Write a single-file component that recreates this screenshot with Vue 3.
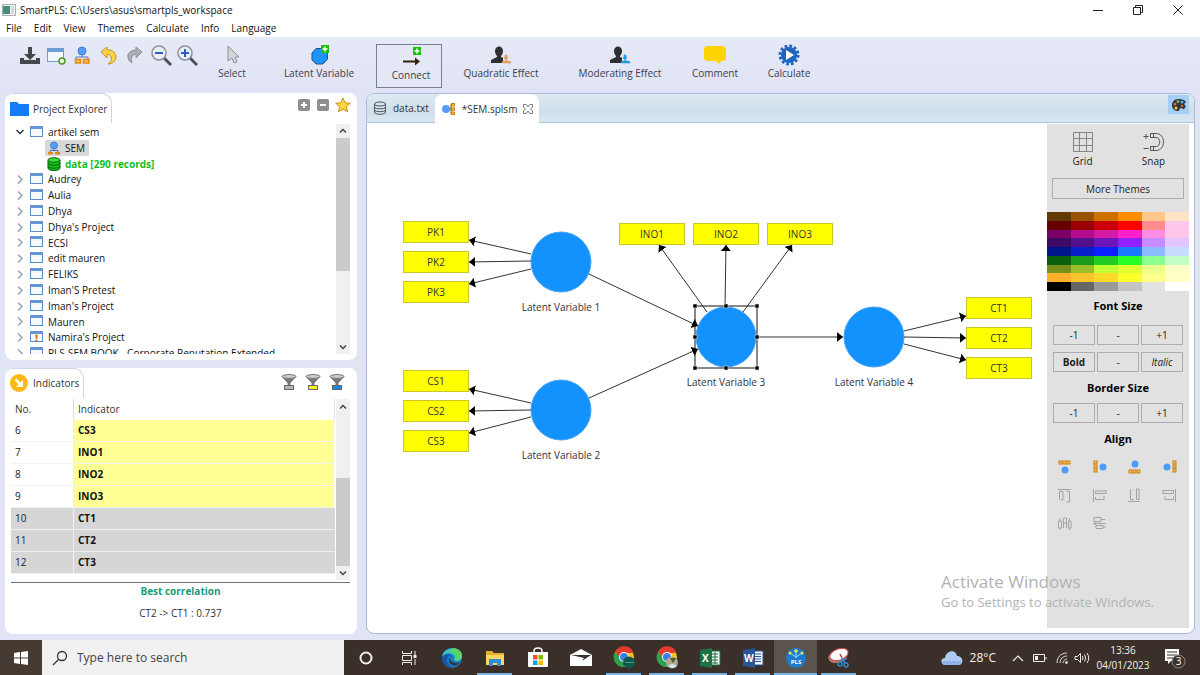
<script setup>
const menus = ['File', 'Edit', 'View', 'Themes', 'Calculate', 'Info', 'Language']
const projects = [
  'Audrey', 'Aulia', 'Dhya', "Dhya's Project", 'ECSI', 'edit mauren', 'FELIKS', "Iman'S Pretest",
  "Iman's Project", 'Mauren', "Namira's Project", 'PLS-SEM BOOK - Corporate Reputation Extended',
]
const indicators = [
  { no: 6, name: 'CS3', used: true },
  { no: 7, name: 'INO1', used: true },
  { no: 8, name: 'INO2', used: true },
  { no: 9, name: 'INO3', used: true },
  { no: 10, name: 'CT1' },
  { no: 11, name: 'CT2' },
  { no: 12, name: 'CT3' },
]
const filters = [
  { name: 'All', color: '#b4b4b4' },
  { name: 'Used', color: '#f7f01c' },
  { name: 'Unused', color: '#1e86dc' },
]
const boxes = [
  ['PK1', 36, 97], ['PK2', 36, 127], ['PK3', 36, 157],
  ['CS1', 36, 246], ['CS2', 36, 276], ['CS3', 36, 306],
  ['INO1', 252, 99], ['INO2', 326, 99], ['INO3', 400, 99],
  ['CT1', 599, 173], ['CT2', 599, 203], ['CT3', 599, 233],
]
const latents = [
  ['Latent Variable 1', 194, 138], ['Latent Variable 2', 194, 286],
  ['Latent Variable 3', 359, 213], ['Latent Variable 4', 507, 213],
]
const paths = [
  [164, 130, 102, 116], [164, 137, 102, 138], [164, 145, 102, 160],
  [164, 279, 102, 265], [164, 286, 102, 287], [164, 293, 102, 309],
  [340, 188, 292, 121], [358, 183, 359, 121], [376, 188, 425, 121],
  [222, 150, 331, 202], [222, 274, 331, 225], [392, 213, 476, 213],
  [537, 207, 599, 192], [537, 213, 599, 214], [537, 220, 599, 236],
]
const handles = [[328, 182], [359, 182], [390, 182], [328, 213], [390, 213], [328, 244], [359, 244], [390, 244]]
const swatches = [
  '#623a00', '#975300', '#cc7000', '#ff8c00', '#ffc78a', '#ffe3c5',
  '#650000', '#9b0000', '#cc0000', '#ff0000', '#ff8c8c', '#ffc6ec',
  '#7c0067', '#b10d8c', '#d41ba5', '#ff20cc', '#ff8ce0', '#ffc6ec',
  '#3d0a66', '#510f8c', '#6d17bb', '#9020ff', '#c78cff', '#e3c6ff',
  '#00148c', '#0a1fcc', '#0a20ff', '#1a78ff', '#8cbcff', '#c6ddff',
  '#0a600f', '#1a9b1a', '#22cc22', '#2aff2a', '#8cff8c', '#c6ffc6',
  '#76901a', '#9bbf2a', '#c2ff33', '#e1ff33', '#ecff8c', '#ffffc6',
  '#ffb02a', '#ffc52a', '#ffd92a', '#ffff2a', '#ffff8c', '#ffffc6',
  '#000000', '#666666', '#999999', '#c3c3c3', '#e1e1e1', '#ffffff',
]
const alignColor = [
  { c: [7, 10], b: [[1, 1], [5, 1], [9, 1]] },
  { c: [10, 7], b: [[1, 1], [1, 5], [1, 9]] },
  { c: [7, 4], b: [[1, 10], [5, 10], [9, 10]] },
  { c: [4, 7], b: [[10, 1], [10, 5], [10, 9]] },
]
const alignGray = [
  'M1 1.5H14M2.5 12V3.5H6V12H4M9.5 3.5H12.500V14H9.500',
  'M1.500 1V14M14 2V5.500H3.500V3H14M12 8V11.500H3.500V9',
  'M1 13.500H13M3.500 1V11.500H6.500M9.500 1V11.500H12V1H9',
  'M13.500 1V14M1 2V5.500H11.500V2.500H1M3 8V11.500H11.500V8.500',
  'M1.500 5V12H4.500V5ZM6.500 12V2H9.500V12M7 7H9M11.500 5V12H14V5ZM3 5V2M12.500 5V2M3 14V12M12.500 14V12',
  'M2 1.500H9V5.500H2ZM1 7.500H14M4 9.500H11V12.500H4ZM9 3.500H13M11 11H14M3 5V9',
]
</script>

<template>
  <div class="app">
    <header class="titlebar">
      <svg class="logo" width="14" height="12" viewBox="0 0 14 12"><rect x=".5" y=".5" width="13" height="11" fill="#f4f6f6" stroke="#a9b0b2" /><rect x="1" y="2" width="7" height="8" fill="#41907c" /><rect x="9" y="2" width="3" height="8" fill="#d3dbe0" /></svg>
      <span class="title">SmartPLS: C:\Users\asus\smartpls_workspace</span>
      <div class="winbtns">
        <button aria-label="Minimize"><svg width="12" height="12"><path d="M1 6.500H11" stroke="#222" /></svg></button>
        <button aria-label="Restore"><svg width="12" height="12" fill="none" stroke="#222"><path d="M1.500 3.500H8.500V10.500H1.500ZM3.500 3.500V1.500H10.500V8.500H8.500" /></svg></button>
        <button aria-label="Close"><svg width="12" height="12" stroke="#222"><path d="M1.500 1.500L10.500 10.500M10.500 1.500L1.500 10.500" /></svg></button>
      </div>
    </header>
    <nav class="menubar"><button v-for="m in menus" :key="m">{{ m }}</button></nav>

    <div class="toolbar">
      <div class="icons">
        <button aria-label="Save"><svg width="22" height="22"><path d="M9 2H13V9H17L11 15L5 9H9Z" fill="#45474b" /><path d="M1 13H5V15H17V13H21V19H1Z" fill="#45474b" /></svg></button>
        <button aria-label="New project"><svg width="22" height="22"><rect x="2.500" y="3.500" width="16" height="13" fill="#f3f8fd" stroke="#6f9ccb" /><path d="M3 4H18V7H3Z" fill="#6ba0db" /><circle cx="17" cy="16" r="3" fill="#eaf7d8" stroke="#4f942b" stroke-width="1.500" /></svg></button>
        <button aria-label="New model"><svg width="22" height="22"><path d="M11 9V12M5 14V12H17V14" fill="none" stroke="#5578a8" /><circle cx="11" cy="6" r="4" fill="#569cfb" stroke="#3f7fd4" /><path d="M4.500 14.500H9.500V18H4.500ZM12.500 14.500H18V18H12.500Z" fill="#ffc549" stroke="#e08a12" stroke-width="1.500" /></svg></button>
        <button aria-label="Undo"><svg width="22" height="22" viewBox="-1 0 22 22"><path d="M3 7L9 2V5C15 4 18 9 18 12C18 16 14 19 10 19C13 17 14 15 13 12C12 10 11 9 9 9.500V13Z" fill="#f9d24a" stroke="#c99416" /></svg></button>
        <button aria-label="Redo"><svg width="22" height="22" viewBox="-1 0 22 22"><path d="M18 7L12 2V5C6 5 3 9 4 12C4 15 6 17 8 18C7 15 7 12 9 10.500C10 9.500 11 9.500 12 9.500V13Z" fill="#a9adb1" stroke="#8f9498" /></svg></button>
        <button aria-label="Zoom out"><svg width="24" height="24" viewBox="-2 0 24 24"><path d="M14 14L21 21" stroke="#4d5056" stroke-width="3" /><circle cx="9" cy="9" r="7" fill="#e9f0fa" stroke="#8c9199" stroke-width="1.500" /><path d="M5 9H13" stroke="#2c5cc8" stroke-width="2" /></svg></button>
        <button aria-label="Zoom in"><svg width="24" height="24" viewBox="-2 0 24 24"><path d="M14 14L21 21" stroke="#4d5056" stroke-width="3" /><circle cx="9" cy="9" r="7" fill="#e9f0fa" stroke="#8c9199" stroke-width="1.500" /><path d="M5 9H13M9 5V13" stroke="#2c5cc8" stroke-width="2" /></svg></button>
      </div>
      <button class="tool select"><svg width="24" height="22"><path d="M8 2V17L12 14L14 19L17 18L15 13H19Z" fill="#d3d6da" stroke="#8d9095" /></svg>Select</button>
      <button class="tool latent"><svg width="24" height="22"><path d="M9 4.500H16L20.500 9V15L16 20H9L5 16V9Z" fill="#1e93fb" stroke="#2b4f78" stroke-linejoin="round" /><rect x="14" y="1" width="8" height="8" fill="#1cc011" /><path d="M18 2.500V7.500M15.500 5H20.500" stroke="#fff" stroke-width="1.500" /></svg>Latent Variable</button>
      <button class="tool connect"><svg width="24" height="22"><rect x="14" y="1" width="8" height="8" fill="#1cc011" /><path d="M18 2.500V7.500M15.500 5H20.500" stroke="#fff" stroke-width="1.500" /><path d="M4 15.500H17" stroke="#33220c" stroke-width="2" /><path d="M16 11.500L21 15.500L16 19.500Z" fill="#33220c" /></svg>Connect</button>
      <button class="tool quadratic"><svg width="24" height="22"><path d="M6 7C6 1 14 1 14 7C14 9 13 11 12 12V13L18 15V19H2V16L8 13V12C7 11 6 9 6 7Z" fill="#2d2f33" /><rect x="14" y="12" width="9" height="8" fill="#e3e5f4" /><circle cx="17" cy="12" r="1.500" fill="#e29a55" /><path d="M17 13V18M15 14H19M13 18.500C16 17 19 17 22 18.500Z" fill="none" stroke="#e29a55" stroke-width="1.500" /></svg>Quadratic Effect</button>
      <button class="tool moderating"><svg width="24" height="22"><path d="M6 7C6 1 14 1 14 7C14 9 13 11 12 12V13L18 15V19H2V16L8 13V12C7 11 6 9 6 7Z" fill="#2d2f33" /><rect x="14" y="12" width="9" height="8" fill="#e3e5f4" /><circle cx="17" cy="12" r="1.500" fill="#2499e6" /><path d="M17 13V18M15 14H19M13 18.500C16 17 19 17 22 18.500Z" fill="none" stroke="#2499e6" stroke-width="1.500" /></svg>Moderating Effect</button>
      <button class="tool comment"><svg width="24" height="22"><path d="M5 2H19Q23 2 23 6V13Q23 17 19 17H18L16 20L13 17H5Q1 17 1 13V6Q1 2 5 2Z" fill="#ffd500" /></svg>Comment</button>
      <button class="tool calculate"><svg width="24" height="22"><circle cx="12" cy="11" r="9" fill="none" stroke="#1c66bf" stroke-width="3" stroke-dasharray="2.700 2.012" /><circle cx="12" cy="11" r="8" fill="#1c66bf" /><path d="M9 6L17 11L9 16Z" fill="#fff" /></svg>Calculate</button>
    </div>

    <main class="workspace">
      <aside class="side">
        <section class="panel">
          <div class="phead">
            <h2 class="ptab explorer"><svg width="20" height="16"><path d="M0 1H7L9 3H19V15H0Z" fill="#137cf6" /></svg>Project Explorer</h2>
            <div class="pacts">
              <button aria-label="Expand all"><svg width="14" height="14"><rect x="1" y="1" width="12" height="12" rx="2" fill="#8f8f8f" /><path d="M7 4V10M4 7H10" stroke="#fff" stroke-width="2" /></svg></button>
              <button aria-label="Collapse all"><svg width="14" height="14"><rect x="1" y="1" width="12" height="12" rx="2" fill="#8f8f8f" /><path d="M4 7H10" stroke="#fff" stroke-width="2" /></svg></button>
              <button aria-label="Favourite"><svg width="16" height="16"><path d="M8 1L10.200 5.800L15.300 6.200L11.400 9.700L12.600 14.800L8 12L3.400 14.800L4.600 9.700L.7 6.200L5.800 5.800Z" fill="#ffd83f" stroke="#c98d17" /></svg></button>
            </div>
          </div>
          <div class="scrollrow treebox">
            <div class="treeview">
              <ul class="tree">
                <li><svg class="chev" width="10" height="10"><path d="M1.500 3L5 6.500L8.500 3" fill="none" stroke="#333" stroke-width="1.500" /></svg><svg width="14" height="12"><rect x=".5" y=".5" width="12" height="10" fill="#f4f9fe" stroke="#5f8cc4" /><path d="M0 0H13V3H0Z" fill="#6595d2" /></svg><span>artikel sem</span></li>
                <li class="child"><span class="sel"><svg width="14" height="14"><path d="M7 7V10M3 11V9.500H11V11" fill="none" stroke="#5578a8" /><circle cx="7" cy="4.500" r="3.500" fill="#569cfb" stroke="#3f7fd4" /><path d="M1 11H6V13.500H1ZM8 11H13V13.500H8Z" fill="#e08a12" /></svg>SEM</span></li>
                <li class="child"><span class="data"><svg width="14" height="14"><path d="M1 3V11C1 14.500 13 14.500 13 11V3" fill="#12c312" stroke="#145c14" /><ellipse cx="7" cy="3" rx="6" ry="2.300" fill="#33e033" stroke="#145c14" /><path d="M1 6C1 9 13 9 13 6M1 9C1 12 13 12 13 9" fill="none" stroke="#145c14" /></svg>data [290 records]</span></li>
                <li v-for="p in projects" :key="p"><svg class="chev" width="10" height="10"><path d="M3 1.500L7 5.500L3 9.500" fill="none" stroke="#a0a0a0" stroke-width="1.500" /></svg><svg width="14" height="12"><rect x=".5" y=".5" width="12" height="10" fill="#f4f9fe" stroke="#5f8cc4" /><path d="M0 0H13V3H0Z" fill="#6595d2" /><path v-if="p.startsWith('Namira')" d="M6.500 3.500V7.500M6.500 8.500V10" stroke="#d8641a" stroke-width="2" /></svg><span>{{ p }}</span></li>
              </ul>
            </div>
            <div class="sbar"><svg width="14" height="14"><path d="M4 8.500L7 5.500L10 8.500" /></svg><i class="thumb t1"></i><i class="gap"></i><svg width="14" height="14"><path d="M4 5.500L7 8.500L10 5.500" /></svg></div>
          </div>
        </section>

        <section class="panel">
          <div class="phead">
            <h2 class="ptab ind"><svg width="20" height="18"><circle cx="9" cy="9" r="9" fill="#fdb913" /><path d="M5.500 5.500L11 11" stroke="#fff" stroke-width="2.500" /><path d="M13 6V13H6Z" fill="#fff" /></svg>Indicators</h2>
            <div class="pacts filt">
              <button v-for="f in filters" :key="f.name" :aria-label="f.name"><svg width="16" height="16"><path d="M1 3L6.500 9V12H9.500V9L15 3Z" fill="#777" /><ellipse cx="8" cy="2.500" rx="7" ry="2" fill="#c9c9c9" stroke="#777" /><rect x="3.500" y="11.500" width="9" height="4" :fill="f.color" stroke="#666" /></svg></button>
            </div>
          </div>
          <div class="scrollrow indbox">
            <table>
              <thead><tr><th>No.</th><th>Indicator</th></tr></thead>
              <tbody><tr v-for="r in indicators" :key="r.no" :class="r.used ? 'used' : 'free'"><td>{{ r.no }}</td><td>{{ r.name }}</td></tr></tbody>
            </table>
            <div class="sbar"><svg width="14" height="14"><path d="M4 9.500L7 6.500L10 9.500" /></svg><i class="gap"></i><i class="thumb t2"></i><svg width="14" height="14"><path d="M4 5.500L7 8.500L10 5.500" /></svg></div>
          </div>
          <div class="corr"><strong>Best correlation</strong><span>CT2 -&gt; CT1 : 0.737</span></div>
        </section>
      </aside>

      <section class="editor">
        <div class="tabs">
          <button class="tab"><svg width="14" height="14" fill="#d8e3ed" stroke="#4a555e"><path d="M1.500 3V11C1.500 14 12.500 14 12.500 11V3" /><ellipse cx="7" cy="3" rx="5.500" ry="2" /><path d="M1.500 6C1.500 8.500 12.500 8.500 12.500 6M1.500 8.800C1.500 11.300 12.500 11.300 12.500 8.800" fill="none" /></svg>data.txt</button>
          <button class="tab on"><svg width="14" height="14"><path d="M7 7H9M11 2H9V12H11" fill="none" stroke="#8a5a14" /><circle cx="4" cy="7" r="4" fill="#569cfb" /><path d="M9.500 1.500H12.500V4H9.500ZM9.500 5.800H12.500V8.300H9.500ZM9.500 10H12.500V12.500H9.500Z" fill="#ffc549" stroke="#c87a12" /></svg>*SEM.splsm<svg width="10" height="10" fill="#fff" stroke="#777"><path d="M.5 .5H3L5 3L7 .5H9.500V3L7.500 5L9.500 7V9.500H7L5 7L3 9.500H.5V7L2.500 5L.5 3Z" /></svg></button>
          <button class="theme" aria-label="Theme palette"><svg width="16" height="16"><path d="M8 2C3 2 1 5 1 8C1 12 4 14 7 14C9 14 8 11 10 11C12 11 12 13 13 12C15 10 15 9 13 7L15 5C14 3 11 2 8 2Z" fill="#30343a" /><circle cx="4" cy="7" r="1.500" fill="#e8622a" /><circle cx="7" cy="4.500" r="1.500" fill="#77b940" /><circle cx="11" cy="5" r="1.500" fill="#58aef2" /><circle cx="5" cy="11" r="1.500" fill="#f1cf39" /><circle cx="11" cy="9" r="1.200" fill="#e8622a" /></svg></button>
        </div>
        <div class="body">
          <svg class="canvas" role="img" aria-label="Path model">
            <defs><marker id="head" markerUnits="userSpaceOnUse" markerWidth="8" markerHeight="12" refX="6" refY="5" orient="auto"><path d="M0 0L6 5L0 10Z" fill="#000" /></marker></defs>
            <circle v-for="l in latents" :key="l[0]" :cx="l[1]" :cy="l[2]" r="30" class="lv" />
            <text v-for="l in latents" :key="l[0]" :x="l[1]" :y="l[2] + 49" class="lbl">{{ l[0] }}</text>
            <g v-for="b in boxes" :key="b[0]"><rect :x="b[1] + .5" :y="b[2] + .5" width="65" height="21" class="mv" /><text :x="b[1] + 33" :y="b[2] + 15" class="lbl">{{ b[0] }}</text></g>
            <line v-for="(p, i) in paths" :key="i" :x1="p[0]" :y1="p[1]" :x2="p[2]" :y2="p[3]" class="ln" marker-end="url(#head)" />
            <rect x="328" y="182" width="62" height="62" fill="none" stroke="#111" />
            <rect v-for="(h, i) in handles" :key="'h' + i" :x="h[0] - 2" :y="h[1] - 2" width="4" height="4" fill="#000" stroke="#fff" stroke-width=".5" />
          </svg>
          <aside class="props">
            <div class="toggles">
              <button><svg width="22" height="22" fill="none" stroke="#858585"><path d="M1.500 1.500H20.500V20.500H1.500ZM7.500 1V21M14.500 1V21M1 7.500H21M1 14.500H21" /></svg>Grid</button>
              <button><svg width="24" height="22" fill="none" stroke="#555"><path d="M8.500 2.500H14C24 2.500 24 19.500 14 19.500H8.500V15.500H14C19 15.500 19 6.500 14 6.500H8.500ZM11.500 2.500V6.500M11.500 15.500V19.500M1.500 5.500H6.500M4 3V8M1.500 17.500H6.500" /></svg>Snap</button>
            </div>
            <button class="btn more">More Themes</button>
            <div class="swatches"><button v-for="(c, i) in swatches" :key="i" :style="{ background: c }" :aria-label="c"></button></div>
            <h3>Font Size</h3>
            <div class="trio"><button class="btn">-1</button><button class="btn">-</button><button class="btn">+1</button><button class="btn b">Bold</button><button class="btn">-</button><button class="btn it">Italic</button></div>
            <h3 class="h2nd">Border Size</h3>
            <div class="trio"><button class="btn">-1</button><button class="btn">-</button><button class="btn">+1</button></div>
            <h3 class="h3rd">Align</h3>
            <div class="aligns">
              <button v-for="(a, i) in alignColor" :key="'c' + i" :aria-label="'Align indicators ' + (i + 1)"><svg width="14" height="14"><rect v-for="(b, j) in a.b" :key="j" :x="b[0]" :y="b[1]" width="3" height="3" fill="#f6c063" stroke="#c98112" /><circle :cx="a.c[0]" :cy="a.c[1]" r="3.500" fill="#4c9dfb" /></svg></button>
              <button v-for="(d, i) in alignGray" :key="'g' + i" :aria-label="'Align ' + (i + 1)"><svg width="15" height="15"><path :d="d" fill="none" stroke="#a2a2a2" /></svg></button>
            </div>
          </aside>
        </div>
      </section>
    </main>

    <div class="watermark"><b>Activate Windows</b><span>Go to Settings to activate Windows.</span></div>

    <footer class="taskbar">
      <button class="start" aria-label="Start"><svg width="14" height="14" fill="#fff"><path d="M0 2L6 1V6.500H0ZM7 1L14 0V6.500H7ZM0 7.500H6V13L0 12ZM7 7.500H14V14L7 13Z" /></svg></button>
      <label class="search"><svg width="16" height="16" fill="none" stroke="#333"><circle cx="10" cy="6" r="4.500" stroke-width="1.300" /><path d="M6.500 9.500L1 15" stroke-width="1.300" /></svg><input type="text" aria-label="Search" placeholder="Type here to search" /></label>
      <button class="app-btn" aria-label="Cortana"><svg width="16" height="16"><circle cx="8" cy="8" r="5.500" fill="none" stroke="#f1eeec" stroke-width="2" /></svg></button>
      <button class="app-btn" aria-label="Task view"><svg width="16" height="16" fill="none" stroke="#f1eeec"><path d="M1.500 1V3.500H10.500V1M1.500 5.500H10.500V10.500H1.500ZM1.500 15V12.500H10.500V15M14 1V5M14 9V15" /><path d="M14 5V8" stroke-width="3" /></svg></button>
      <button class="app-btn" aria-label="Edge"><svg width="22" height="22"><circle cx="11" cy="11" r="10" fill="#1679c8" /><path d="M1 10C2 -1 20 -2 21 9C21 14 16 15 13 13C14 12 14 10 13 9C10 5 3 6 1 10Z" fill="#37c6b8" /><path d="M12 1C18 1 21 5 21 9C21 13 16 15 13 13C16 8 13 5 9 5Z" fill="#5bd36b" /><path d="M10 8C3 9 5 18 12 20C5 20 1 16 1 11C3 7 7 6 10 8Z" fill="#1557a5" /><path d="M9 11C9 15 14 18 19 15C17 18 14 19 12 18C8 17 7 13 9 11Z" fill="#3a3029" /></svg></button>
      <button class="app-btn run" aria-label="File Explorer"><svg width="22" height="20"><path d="M2 3H8L10 5H20V17H2Z" fill="#e8ae2e" /><path d="M2 7H20V17H2Z" fill="#fdd667" /><path d="M5 11H17V18H13V15H9V18H5Z" fill="#2f8ed6" /></svg></button>
      <button class="app-btn" aria-label="Store"><svg width="22" height="22"><path d="M7 6V4C7 0 15 0 15 4V6" fill="none" stroke="#fff" stroke-width="1.500" /><path d="M1 5H21V19Q21 20 20 20H2Q1 20 1 19Z" fill="#fff" /><path d="M6 8H10.500V12.500H6Z" fill="#f25022" /><path d="M11.500 8H16V12.500H11.500Z" fill="#7fba00" /><path d="M6 13.500H10.500V18H6Z" fill="#00a4ef" /><path d="M11.500 13.500H16V18H11.500Z" fill="#ffb900" /></svg></button>
      <button class="app-btn" aria-label="Mail"><svg width="22" height="20"><path d="M0 7L11 1L22 7V18H0Z" fill="#fff" /><path d="M1 7H21L12 13L14 10Z" fill="#3a3029" /></svg></button>
      <button v-for="n in 2" :key="n" class="app-btn run" aria-label="Chrome"><svg width="22" height="24"><circle cx="11" cy="11" r="10" fill="#fcc31e" /><path d="M2 6A10 10 0 0 1 20.500 7H11L8 13Z" fill="#e33b2e" /><path d="M2 6A10 10 0 0 0 11 21L14 14L8 13Z" fill="#2ba24c" /><circle cx="11" cy="11" r="5" fill="#fff" /><circle cx="11" cy="11" r="4" fill="#3c7de6" /><circle cx="16" cy="16.500" r="6" :fill="n === 1 ? '#0d5a48' : '#b3a68b'" /><path v-if="n === 1" d="M12 16.500H21" stroke="#4c9b87" /><path v-else d="M12 20Q16 16 21 20Q17 24 12 20Z" fill="#d3e4f2" /><path v-if="n === 2" d="M14 12L17 17L20 12" fill="#3b6135" /></svg></button>
      <button class="app-btn run" aria-label="Excel"><svg width="22" height="20"><rect x="10" y="3" width="11" height="14" fill="#eef5f0" stroke="#1d7144" /><path d="M12 6H19M12 9H19M12 12H19M12 15H19M16 4V16" stroke="#1d7144" /><path d="M1 2L13 0V20L1 18Z" fill="#1d7144" /><text x="3" y="14" class="ltr">X</text></svg></button>
      <button class="app-btn run" aria-label="Word"><svg width="22" height="20"><rect x="10" y="3" width="11" height="14" fill="#f1f4fa" stroke="#2a5699" /><path d="M12 6H19M12 8.500H19M12 11H19M12 13.500H19" stroke="#2a5699" /><path d="M1 2L13 0V20L1 18Z" fill="#2a5699" /><text x="2" y="14" class="ltr">W</text></svg></button>
      <button class="app-btn run active" aria-label="SmartPLS"><svg width="22" height="22"><circle cx="11" cy="11" r="10" fill="#1c7bcc" /><path d="M5 6L11 10L17 6M11 4V11" stroke="#9adcf7" fill="none" /><circle cx="5" cy="6" r="1.500" fill="#e8e552" /><circle cx="11" cy="4" r="1.800" fill="#e8e552" /><circle cx="17" cy="6" r="1.500" fill="#e8e552" /><text x="11" y="17" class="pls">PLS</text></svg></button>
      <button class="app-btn run" aria-label="Snipping tool"><svg width="24" height="22"><ellipse cx="11" cy="9" rx="10" ry="6.500" transform="rotate(-20 11 9)" fill="#b87873" /><ellipse cx="12" cy="7.500" rx="9.500" ry="5.500" transform="rotate(-20 12 7.500)" fill="#fff" stroke="#d54b4b" /><path d="M13 7L15 11" stroke="#c33" stroke-width="1.500" /><path d="M15 11L18 16M20 11L14 15" stroke="#2f8bc8" stroke-width="1.500" /><circle cx="13" cy="17" r="2" fill="none" stroke="#2f8bc8" stroke-width="1.500" /><circle cx="19" cy="18" r="2" fill="none" stroke="#2f8bc8" stroke-width="1.500" /></svg></button>
      <div class="tray">
        <svg width="22" height="16"><path d="M5 15C-1 15 -1 8 4 8C5 0 15 -1 16 6C23 6 23 15 17 15Z" fill="#aecbf5" /><path d="M5 15C0 15 0 11 3 11H19C22 12 21 15 17 15Z" fill="#8fb2ea" /></svg>
        <span class="temp">28°C</span>
        <svg class="up" width="12" height="8"><path d="M1 7L6 2L11 7" fill="none" stroke="#eee" stroke-width="1.200" /></svg>
        <svg class="bat" width="14" height="10"><path d="M.5 1.500H11.500V8.500H.5ZM13 4V6.500" fill="none" stroke="#eee" /><path d="M2 3H5V7H2Z" fill="#eee" /></svg>
        <svg class="wifi" width="12" height="12" fill="none" stroke="#ddd"><path d="M1 11C1 5 5 1 11 1M4 11C4 7 7 4 11 4M7 11C7 9 9 7 11 7" /><circle cx="10.500" cy="10.500" r="1" fill="#fff" /></svg>
        <svg width="16" height="12" fill="none" stroke="#eee"><path d="M1 4.500H3.500L6.500 1.500V10.500L3.500 7.500H1ZM8.500 4Q9.500 6 8.500 8M10.500 2.500Q13 6 10.500 9.500M13 1Q16.500 6 13 11" /></svg>
        <div class="clock"><span>13:36</span><span>04/01/2023</span></div>
        <button class="note" aria-label="Notifications"><svg width="22" height="22"><path d="M1 2H15V14H7L4 17V14H1Z" fill="#fff" /><path d="M3 5H13M3 8H13M3 11H9" stroke="#3a3029" /><circle cx="14.500" cy="14.500" r="6.500" fill="#3b342f" stroke="#8d8783" /><text x="14.500" y="18" class="cnt">3</text></svg></button>
      </div>
    </footer>
  </div>
</template>

<style>
body { margin: 0; }
</style>

<style scoped>
.app { height: 100vh; min-height: 600px; display: flex; flex-direction: column; position: relative; overflow: hidden; background: #e1e4f5; font: 11px/16px "Open Sans", "Noto Sans", sans-serif; color: #222; }
* { box-sizing: border-box; }
button { font: inherit; color: inherit; border: 0; background: none; padding: 0; margin: 0; white-space: nowrap; }
svg { display: block; flex: none; }
h2, h3 { margin: 0; font-weight: 400; font-size: 11px; }
.titlebar { display: flex; align-items: center; height: 20px; padding: 0 2px; background: #fff; flex: none; font-size: 10px; }
.title { margin-left: 4px; flex: 1; color: #111; }
.winbtns { display: flex; }
.winbtns button { width: 40px; display: flex; justify-content: center; }
.menubar { display: flex; gap: 12px; height: 17px; padding-left: 6px; background: #fff; flex: none; font-size: 10px; line-height: 17px; color: #111; }
.toolbar { display: flex; height: 56px; flex: none; align-items: flex-start; padding-top: 7px; background: linear-gradient(#e6e9f6, #e0e3f5); }
.icons { display: flex; padding-left: 17px; }
.icons button { width: 26px; height: 24px; display: flex; justify-content: center; align-items: center; }
.tool { display: flex; flex-direction: column; align-items: center; color: #3c3f48; font-size: 10px; }
.tool svg { margin-bottom: -1px; }
.select { width: 66px; } .latent { width: 108px; } .quadratic { width: 118px; } .moderating { width: 120px; } .comment { width: 70px; } .calculate { width: 78px; }
.connect { width: 66px; height: 44px; margin-left: 3px; padding: 1px 0 0 4px; border: 1px solid #777d92; background: #e4e7f5; }
.workspace { flex: 1; min-height: 0; display: grid; grid-template-columns: 352px minmax(0, 1fr); gap: 9px; padding: 0 5px 6px; }
.side { display: grid; grid-template-rows: 1fr 1fr; gap: 8px; min-height: 0; }
.panel { background: #fff; border-radius: 8px; display: flex; flex-direction: column; min-height: 0; padding: 0 7px 6px 6px; overflow: hidden; }
.phead { display: flex; justify-content: space-between; height: 30px; flex: none; margin: 0 -1px 0 -6px; }
.ptab { display: flex; align-items: center; gap: 3px; padding: 0 4px 0 5px; border: 1px solid #cdd6e6; border-width: 1px 1px 0 0; border-radius: 8px 10px 0 0; color: #333; font-size: 10px; }
.pacts { display: flex; gap: 5px; align-items: center; height: 24px; }
.filt { gap: 8px; padding-right: 6px; height: 28px; }
.scrollrow { display: flex; min-height: 0; }
.treebox { flex: 1; margin-top: 1px; }
.treeview { flex: 1; overflow: hidden; }
.tree { list-style: none; margin: 0; padding: 0; height: 237px; display: grid; grid-template-rows: repeat(15, 1fr); color: #111; font-size: 10px; }
.tree li { display: flex; align-items: center; padding-left: 4px; gap: 5px; min-height: 0; }
.tree li > span { margin-left: -1px; white-space: nowrap; }
.tree .child { padding-left: 35px; }
.child span { display: flex; align-items: center; gap: 4px; padding: 0 4px 0 2px; height: 16px; }
.child .sel { background: #d8d8d8; }
.child .data { color: #10bf1e; font-weight: 700; }
.sbar { width: 14px; background: #f0f0f0; display: flex; flex-direction: column; flex: none; }
.sbar svg { fill: none; stroke: #444; stroke-width: 1.500; }
.thumb { background: #cbcbcb; flex: none; }
.t1 { height: 133px; } .t2 { height: 88px; }
.gap { flex: 1; }
.indbox { margin-top: 1px; height: 181px; flex: none; }
table { flex: 1; border-collapse: separate; border-spacing: 0; height: 175px; margin-right: 1px; font-size: 10px; table-layout: fixed; align-self: flex-start; }
th, td { text-align: left; padding: 0 4px; height: 22px; line-height: 16px; }
th { height: 21px; font-weight: 400; border-right: 1px solid #dfdfdf; color: #333; }
th:first-child, td:first-child { width: 63px; }
td { border-bottom: 1px solid #f0f0f0; }
td:first-child { border-right: 1px solid #f0f0f0; }
td:last-child { font-weight: 700; color: #111; }
.used td:last-child { background: #ffff96; border-right: 1px solid #fff; }
.free td { background: #d6d6d6; }
.corr { margin-top: 2px; border-top: 1px solid #6b7378; display: flex; flex-direction: column; align-items: center; gap: 6px; font-size: 10px; color: #333; }
.corr strong { color: #1c9c7c; }
.editor { background: #fff; border: 1px solid #a9bdd8; border-radius: 8px; overflow: hidden; display: flex; flex-direction: column; min-width: 0; min-height: 0; }
.tabs { height: 29px; flex: none; display: flex; background: linear-gradient(#dfe9f2, #cfdfea 60%, #d9e7f3); border-bottom: 1px solid #a9c4df; }
.tab { display: flex; align-items: center; gap: 6px; padding: 0 6px; color: #333; font-size: 10px; }
.tab.on { height: 29px; background: #fff; border-radius: 8px 8px 0 0; padding: 0 6px 0 7px; }
.theme { margin: 1px 5px 0 auto; width: 21px; height: 19px; background: #a3cff7; display: grid; place-items: center; }
.body { flex: 1; min-height: 0; display: flex; padding: 1px 5px 5px 0; }
.canvas { flex: 1; min-width: 0; height: 100%; overflow: hidden; }
.lv { fill: #1391fc; stroke: #48a5f6; }
.mv { fill: #ffff00; stroke: #c9c628; }
.lbl { font-size: 10px; text-anchor: middle; fill: #333; }
.ln { stroke: #333; }
.props { width: 142px; background: #e1e1e1; flex: none; color: #222; }
.toggles { display: grid; grid-template-columns: 1fr 1fr; padding-top: 7px; height: 54px; font-size: 10px; }
.toggles button { display: flex; flex-direction: column; align-items: center; }
.btn { border: 1px solid #acacac; height: 20px; line-height: 16px; font-size: 10px; }
.more { display: block; width: calc(100% - 10px); margin: 0 5px 13px; height: 21px; }
.swatches { display: grid; grid-template-columns: repeat(6, 1fr); grid-template-rows: repeat(9, 1fr); height: 79px; }
h3 { font-weight: 700; font-size: 11px; text-align: center; color: #000; margin: 7px 0 11px; }
.trio { display: grid; grid-template-columns: repeat(3, 1fr); gap: 7px 2px; padding: 0 6px; }
.b { font-weight: 700; } .it { font-style: italic; }
.h2nd { margin: 8px 0 7px; }
.h3rd { margin: 8px 0 6px; }
.aligns { display: grid; grid-template-columns: repeat(4, 35px); grid-auto-rows: 28px; }
.aligns button { display: grid; place-items: center; }
.watermark { position: absolute; right: 46px; bottom: 64px; display: flex; flex-direction: column; color: #b2b2b2; font-size: 13px; line-height: 18px; pointer-events: none; }
.watermark b { font-weight: 400; font-size: 17px; line-height: 22px; }
.taskbar { height: 35px; flex: none; display: flex; background: #3a3029; color: #f4f2f0; min-width: 0; }
.start { width: 42px; display: grid; place-items: center; background: #463b32; }
.search { flex: 0 1 302px; display: flex; align-items: center; gap: 9px; padding-left: 10px; background: #f1f1f1; min-width: 0; }
.search input { border: 0; background: none; font: 12px/18px "Open Sans", "Noto Sans", sans-serif; flex: 1; min-width: 0; padding: 0; outline: 0; }
.search input::placeholder { color: #444; opacity: 1; }
.app-btn { width: 43px; display: grid; place-items: center; border-bottom: 2px solid transparent; border-top: 2px solid transparent; flex: none; }
.run { background: linear-gradient(#76b3e8, #76b3e8) center bottom / 35px 2px no-repeat border-box; }
.run.active { background: linear-gradient(#76b3e8, #76b3e8) center bottom / 43px 2px no-repeat border-box, #5b534d; }
.ltr { font-size: 10px; font-weight: 700; fill: #fff; }
.pls { font-size: 6px; font-weight: 700; fill: #fff; text-anchor: middle; }
.cnt { font-size: 10px; fill: #fff; text-anchor: middle; }
.tray { margin-left: auto; display: flex; align-items: center; padding-right: 14px; }
.temp { margin: 0 16px 0 7px; font-size: 12px; }
.up { margin-right: 9px; }
.bat { margin-right: 9px; }
.wifi { margin-right: 6px; }
.clock { display: flex; flex-direction: column; align-items: center; width: 66px; font-size: 10px; line-height: 15px; }
.note { margin-left: 8px; }
</style>
